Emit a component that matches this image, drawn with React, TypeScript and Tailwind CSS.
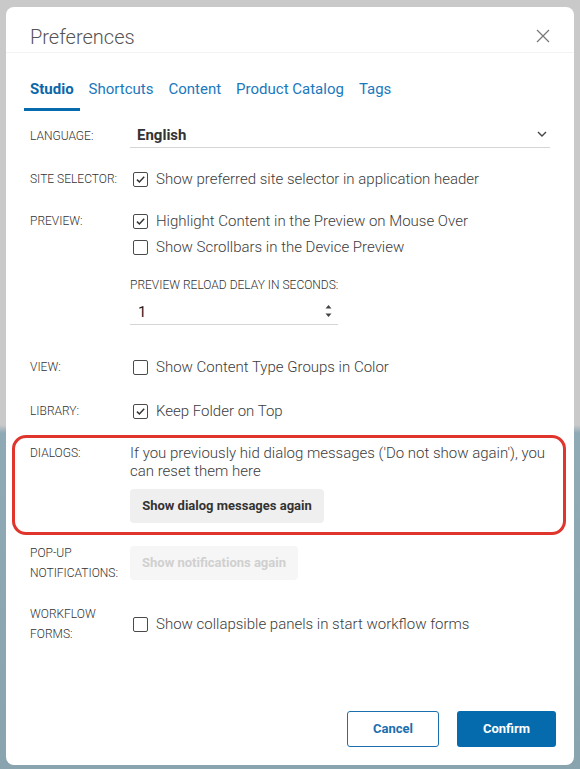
import React from "react";

const Check = ({ checked }: { checked: boolean }) => (
  <span className="ml-[3px] w-[15px] h-[15px] border-[1.5px] border-[#4a4a4a] rounded-[2px] flex items-center justify-center shrink-0">
    {checked && (
      <svg width="11" height="11" viewBox="0 0 11 11">
        <path d="M2 5.6 L4.4 8 L9.2 2.8" fill="none" stroke="#333" strokeWidth="1.5" />
      </svg>
    )}
  </span>
);

const CheckRow = ({ checked, label }: { checked: boolean; label: string }) => (
  <div className="h-[26px] flex items-center gap-[8px]">
    <Check checked={checked} />
    <span className="text-[15px] font-light text-[#3c3c3c]">{label}</span>
  </div>
);

const Label = ({ children, className = "" }: { children: React.ReactNode; className?: string }) => (
  <div className={`w-[100px] shrink-0 text-[12px] font-light uppercase text-[#333] ${className}`}>{children}</div>
);

const tabs = ["Studio", "Shortcuts", "Content", "Product Catalog", "Tags"];

export default function App() {
  return (
    <div
      className="w-[580px] h-[769px] pt-[7px] pl-[6px] bg-[linear-gradient(to_bottom,#c9c9c9_0px,#c9c9c9_425px,#8fa9b5_433px,#89a3af_769px)]"
      style={{ fontFamily: "Roboto, 'Noto Sans', sans-serif" }}
    >
      <div className="w-[568px] h-[758px] bg-white rounded-[8px] flex flex-col">
        {/* header */}
        <div className="flex items-center justify-between px-6 pt-[18px] pb-[3px] border-b border-[#f3f3f3]">
          <h1 className="text-[20px] leading-6 font-light text-[#555]">Preferences</h1>
          <svg width="14" height="14" viewBox="0 0 14 14" className="mt-[-2px]">
            <path d="M1 1 L13 13 M13 1 L1 13" stroke="#777" strokeWidth="1.2" />
          </svg>
        </div>

        {/* tabs */}
        <div className="flex gap-[3px] pl-[18px] pt-[26px]">
          {tabs.map((t, i) => (
            <div
              key={t}
              className={`px-[6px] pb-[9px] text-[15px] leading-5 border-b-[3px] ${
                i === 0 ? "font-bold text-[#0b67a9] border-[#066bad]" : "text-[#1a78bd] border-transparent"
              }`}
            >
              {t}
            </div>
          ))}
        </div>

        {/* body */}
        <div className="flex flex-col">
          <div className="flex items-center px-6 mt-[13px]">
            <Label>Language:</Label>
            <div className="flex-1 h-[24px] border-b border-[#d5d5d5] flex items-center justify-between pl-[7px] pr-[3px]">
              <span className="text-[15px] font-bold text-[#333]">English</span>
              <svg width="10" height="6" viewBox="0 0 10 6" className="mt-[-4px]">
                <path d="M1 1 L5 5 L9 1" fill="none" stroke="#444" strokeWidth="1.4" />
              </svg>
            </div>
          </div>

          <div className="flex items-center px-6 mt-[18px]">
            <Label>Site selector:</Label>
            <CheckRow checked label="Show preferred site selector in application header" />
          </div>

          <div className="flex px-6 mt-[16px]">
            <Label className="leading-[26px]">Preview:</Label>
            <div className="flex flex-col">
              <CheckRow checked label="Highlight Content in the Preview on Mouse Over" />
              <CheckRow checked={false} label="Show Scrollbars in the Device Preview" />
              <div className="mt-[17px] text-[12px] font-light leading-4 uppercase text-[#333]">Preview reload delay in seconds:</div>
              <div className="mt-[7px] w-[208px] h-[25px] border-b border-[#d5d5d5] flex items-center justify-between pl-[8px] pr-[6px]">
                <span className="text-[15px] text-[#222]">1</span>
                <svg width="7" height="16" viewBox="0 0 7 16" className="mt-[-2px]">
                  <path d="M3.5 2 L6.5 5.5 L0.5 5.5 Z" fill="#444" />
                  <path d="M3.5 14 L6.5 10.5 L0.5 10.5 Z" fill="#444" />
                </svg>
              </div>
            </div>
          </div>

          <div className="flex items-center px-6 mt-[29px]">
            <Label>View:</Label>
            <CheckRow checked={false} label="Show Content Type Groups in Color" />
          </div>

          <div className="flex items-center px-6 mt-[18px]">
            <Label>Library:</Label>
            <CheckRow checked label="Keep Folder on Top" />
          </div>

          <div className="ml-[6px] mr-[8px] mt-[11px] border-[3px] border-[#e0352c] rounded-[14px] pl-[15px] pr-[10px] pt-[6px] pb-[9px] flex">
            <Label className="leading-[18px]">Dialogs:</Label>
            <div className="flex flex-col items-start">
              <p className="text-[15px] font-light leading-[18px] text-[#3c3c3c]">
                If you previously hid dialog messages ('Do not show again'), you can reset them here
              </p>
              <button className="mt-[9px] h-[34px] w-[194px] rounded-[4px] bg-[#efefef] text-[13px] font-bold text-[#333]">
                Show dialog messages again
              </button>
            </div>
          </div>

          <div className="flex items-start px-6 mt-[8px]">
            <Label className="leading-[20px]">
              Pop-up
              <br />
              Notifications:
            </Label>
            <button className="mt-[3px] h-[34px] w-[168px] rounded-[4px] bg-[#f6f6f6] text-[13px] font-bold text-[#d0d0d0]">
              Show notifications again
            </button>
          </div>

          <div className="flex items-center px-6 mt-[21px]">
            <Label className="leading-[20px]">
              Workflow
              <br />
              Forms:
            </Label>
            <CheckRow checked={false} label="Show collapsible panels in start workflow forms" />
          </div>
        </div>

        {/* footer */}
        <div className="mt-auto flex justify-end gap-[18px] pr-[18px] pb-[18px]">
          <button className="w-[92px] h-[36px] rounded-[3px] border border-[#1b6fae] bg-white text-[13px] font-bold text-[#1b6fae]">
            Cancel
          </button>
          <button className="w-[99px] h-[36px] rounded-[3px] bg-[#066bad] text-[13px] font-bold text-white">
            Confirm
          </button>
        </div>
      </div>
    </div>
  );
}
